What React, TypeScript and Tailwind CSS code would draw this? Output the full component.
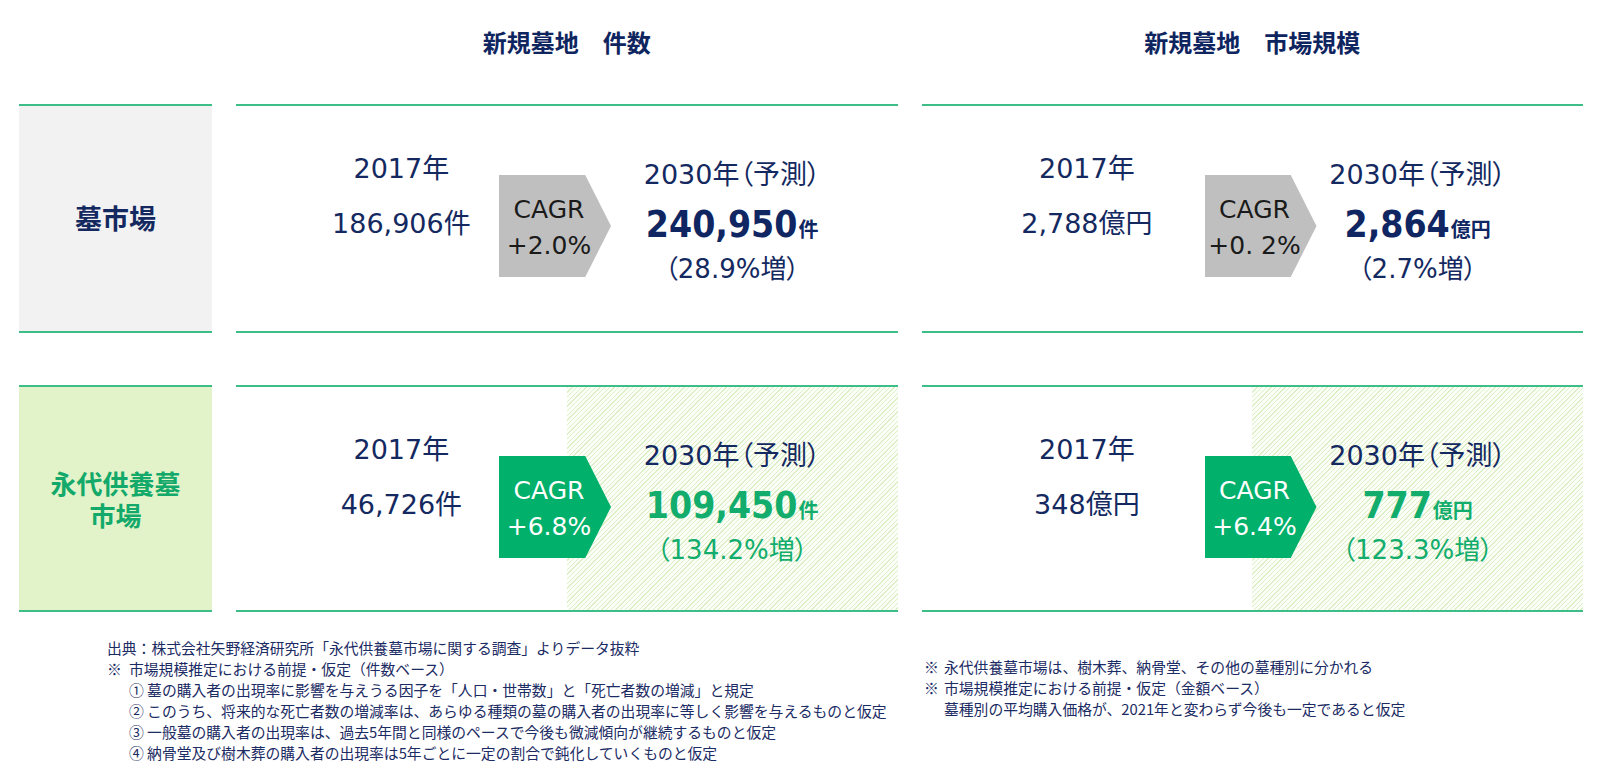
const FONT = "font-['DejaVu_Sans','Noto_Sans_CJK_JP',sans-serif]";
const JP = "font-['Noto_Sans_CJK_JP','DejaVu_Sans',sans-serif]";

type CellProps = {
  base: string;
  baseValue: string;
  cagr: string;
  value: string;
  unit: string;
  pct: string;
  green?: boolean;
  wide?: boolean;
};

function Cell({ base, baseValue, cagr, value, unit, pct, green, wide }: CellProps) {
  return (
    <div className="relative grid grid-cols-2 border-y-2 border-[#3dbd88]">
      <div className="flex flex-col items-center pt-[45px] text-[27px] leading-[36px] text-[#14295f]">
        <div>{base}</div>
        <div className="mt-[19px]">{baseValue}</div>
      </div>
      <div
        className={
          green
            ? "flex flex-col items-center pt-[51px] bg-[repeating-linear-gradient(135deg,#ddefc6_0px,#ddefc6_1px,#fcfef8_1px,#fcfef8_3.3px)]"
            : "flex flex-col items-center pt-[51px]"
        }
      >
        <div className="text-[27px] leading-[36px] text-[#14295f] [font-feature-settings:'palt']">2030年（予測）</div>
        <div
          className={
            green
              ? "mt-[10px] flex items-baseline leading-[44px] text-[#12ad6c]"
              : "mt-[10px] flex items-baseline leading-[44px] text-[#0f2662]"
          }
        >
          <span className="font-['DejaVu_Sans_Condensed','DejaVu_Sans',sans-serif] text-[37px] font-bold">{value}</span>
          <span className={`${JP} ml-[1px] text-[20px] font-bold`}>{unit}</span>
        </div>
        <div
          className={
            green
              ? "text-[26px] leading-[36px] text-[#12ad6c] [font-feature-settings:'palt']"
              : "text-[26px] leading-[36px] text-[#14295f] [font-feature-settings:'palt']"
          }
        >
          （{pct}%増）
        </div>
      </div>
      <div
        className={[
          "absolute top-[69px] flex h-[102px] w-[112px] flex-col items-center justify-center pr-[12px] pt-[4px] text-[25px] leading-[36px] [clip-path:polygon(0_0,77%_0,100%_50%,77%_100%,0_100%)]",
          wide ? "left-[283px]" : "left-[263px]",
          green ? "bg-[#00b06b] text-white" : "bg-[#bfbfbf] text-[#1a1a1a]",
        ].join(" ")}
      >
        <div>CAGR</div>
        <div className="whitespace-pre">{cagr}</div>
      </div>
    </div>
  );
}

export default function App() {
  return (
    <div className={`${FONT} h-[771px] w-[1602px] overflow-hidden bg-white px-[19px]`}>
      <div className="grid grid-cols-[193px_1fr_1fr] gap-x-[24px]">
        <div className="h-[104px]" />
        <div className={`${JP} h-[104px] pt-[26px] text-center text-[24px] font-bold leading-[32px] text-[#0f2560]`}>
          新規墓地　件数
        </div>
        <div className={`${JP} h-[104px] pt-[26px] text-center text-[24px] font-bold leading-[32px] text-[#0f2560]`}>
          新規墓地　市場規模
        </div>

        <div className={`${JP} flex h-[229px] items-center justify-center border-y-2 border-[#3dbd88] bg-[#f2f2f2] text-[27px] font-bold text-[#14295f]`}>
          墓市場
        </div>
        <Cell base="2017年" baseValue="186,906件" cagr="+2.0%" value="240,950" unit="件" pct="28.9" />
        <Cell base="2017年" baseValue="2,788億円" cagr="+0. 2%" value="2,864" unit="億円" pct="2.7" wide />

        <div className={`${JP} mt-[52px] flex h-[227px] items-center justify-center border-y-2 border-[#3dbd88] bg-[#e2f3c9] text-center text-[26px] font-bold leading-[32px] text-[#13a96a]`}>
          <p>
            永代供養墓
            <br />
            市場
          </p>
        </div>
        <div className="mt-[52px] h-[227px] grid">
          <Cell base="2017年" baseValue="46,726件" cagr="+6.8%" value="109,450" unit="件" pct="134.2" green />
        </div>
        <div className="mt-[52px] h-[227px] grid">
          <Cell base="2017年" baseValue="348億円" cagr="+6.4%" value="777" unit="億円" pct="123.3" green wide />
        </div>
      </div>

      <div className={`${JP} flex text-[14.8px] leading-[21px] text-[#1b2b63]`}>
        <div className="mt-[25px] w-[902px] pl-[88px]">
          <div>出典：株式会社矢野経済研究所「永代供養墓市場に関する調査」よりデータ抜粋</div>
          <div className="flex">
            <span className="w-[22px] shrink-0">※</span>
            <span>市場規模推定における前提・仮定（件数ベース）</span>
          </div>
          <div className="pl-[22px]">
            <div>① 墓の購入者の出現率に影響を与えうる因子を「人口・世帯数」と「死亡者数の増減」と規定</div>
            <div>② このうち、将来的な死亡者数の増減率は、あらゆる種類の墓の購入者の出現率に等しく影響を与えるものと仮定</div>
            <div>③ 一般墓の購入者の出現率は、過去5年間と同様のペースで今後も微減傾向が継続するものと仮定</div>
            <div>④ 納骨堂及び樹木葬の購入者の出現率は5年ごとに一定の割合で鈍化していくものと仮定</div>
          </div>
        </div>
        <div className="mt-[44px] pl-[3px]">
          <div className="flex">
            <span className="w-[20px] shrink-0">※</span>
            <span>永代供養墓市場は、樹木葬、納骨堂、その他の墓種別に分かれる</span>
          </div>
          <div className="flex">
            <span className="w-[20px] shrink-0">※</span>
            <span>市場規模推定における前提・仮定（金額ベース）</span>
          </div>
          <div className="pl-[20px]">墓種別の平均購入価格が、2021年と変わらず今後も一定であると仮定</div>
        </div>
      </div>
    </div>
  );
}
